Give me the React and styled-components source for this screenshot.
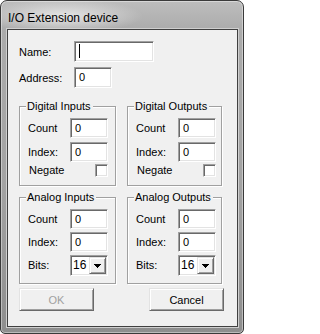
import React from 'react';
import styled, { createGlobalStyle } from 'styled-components';

const Global = createGlobalStyle`
  html, body { margin: 0; padding: 0; background: #fff; }
  body { font-family: "Liberation Sans", Arial, sans-serif; color: #000; }
  * { box-sizing: border-box; }
`;

const Window = styled.div`
  width: 244px;
  height: 334px;
  display: flex;
  flex-direction: column;
  border: 1px solid #3a3a3a;
  border-radius: 7px 7px 5px 5px;
  padding: 0 5px 6px 6px;
  overflow: hidden;
  background:
    radial-gradient(ellipse 80px 17px at 62px 15px, rgba(232,232,232,0.95), rgba(232,232,232,0)),
    linear-gradient(#bdbdbd 0px, #ababab 30px, #a3a3a3 55%, #8e8e8e 100%);
  box-shadow: inset 0 0 0 1px rgba(255,255,255,0.4);
`;

const TitleBar = styled.div`
  height: 28px;
  padding: 7px 0 0 1px;
  flex: none;
`;

const Title = styled.span`
  font-size: 12px;
  line-height: 14px;
  color: #000;
  white-space: nowrap;
`;

const Client = styled.div`
  flex: 1;
  background: #f0f0f0;
  border: 1px solid #404040;
  box-shadow: 0 0 0 1px #cfcfcf;
  padding: 11px 13px 0 11px;
  display: flex;
  flex-direction: column;
`;

const TopRow = styled.div`
  display: flex;
  align-items: center;
  height: 21px;
  margin-top: ${p => p.$mt || 0}px;
`;

const TopLabel = styled.span`
  width: 55px;
  font-size: 11px;
  line-height: 13px;
  padding-top: 2px;
  white-space: nowrap;
`;

const sunken = `
  background: #fff;
  border-style: solid;
  border-width: 1px;
  border-color: #a0a0a0 #ffffff #ffffff #a0a0a0;
  box-shadow: inset 1px 1px 0 #696969, inset -1px -1px 0 #e3e3e3;
`;

const TextBox = styled.div`
  ${sunken}
  width: ${p => p.$w}px;
  height: ${p => p.$h || 20}px;
  padding-left: ${p => p.$pl || 4}px;
  display: flex;
  align-items: center;
  font-size: 11px;
  line-height: 13px;
`;

const Caret = styled.span`
  display: block;
  width: 1px;
  height: 14px;
  margin-top: -2px;
  background: #000;
`;

const GroupGrid = styled.div`
  display: grid;
  grid-template-columns: 97px 95px;
  column-gap: 11px;
  row-gap: 11px;
  margin-top: 18px;
`;

const Group = styled.div`
  position: relative;
  border: 1px solid #a0a0a0;
  box-shadow: inset 1px 1px 0 #fff, 1px 1px 0 #fff;
  padding: 11px 4px ${p => p.$pb}px 8px;
  display: flex;
  flex-direction: column;
  gap: ${p => p.$gap}px;
`;

const GroupTitle = styled.span`
  position: absolute;
  top: -7px;
  left: 6px;
  padding: 0 2px 0 1px;
  background: #f0f0f0;
  font-size: 11px;
  line-height: 13px;
  white-space: nowrap;
`;

const Row = styled.div`
  display: grid;
  grid-template-columns: 42px 38px;
  align-items: center;
  margin-top: ${p => p.$mt || 0}px;
`;

const Label = styled.span`
  font-size: 11px;
  line-height: 13px;
  white-space: nowrap;
  padding-left: ${p => p.$pl || 0}px;
`;

const CheckBox = styled.span`
  ${sunken}
  width: 13px;
  height: 13px;
  justify-self: end;
`;

const Combo = styled.div`
  ${sunken}
  width: 38px;
  height: 21px;
  display: flex;
  align-items: stretch;
`;

const ComboValue = styled.span`
  flex: 1;
  padding: 2px 0 0 2px;
  font-size: 12px;
  line-height: 15px;
`;

const raised = `
  background: #f0f0f0;
  border-style: solid;
  border-width: 1px;
  border-color: #e3e3e3 #696969 #696969 #e3e3e3;
  box-shadow: inset 1px 1px 0 #fff, inset -1px -1px 0 #a0a0a0;
`;

const ComboButton = styled.span`
  ${raised}
  width: 17px;
  display: flex;
  align-items: center;
  justify-content: center;
  margin: 1px 1px 1px 0;
`;

const ButtonRow = styled.div`
  display: flex;
  justify-content: space-between;
  margin-top: 4px;
`;

const Button = styled.button`
  ${raised}
  width: 75px;
  height: 23px;
  padding: 0;
  font-family: "Liberation Sans", Arial, sans-serif;
  font-size: 11px;
  color: ${p => (p.disabled ? '#a0a0a0' : '#000')};
  cursor: default;
`;

const Arrow = () => (
  <svg width="7" height="4" viewBox="0 0 7 4" shapeRendering="crispEdges">
    <path d="M0 0H7V1H6V2H5V3H4V4H3V3H2V2H1V1H0Z" fill="#000" />
  </svg>
);

const DigitalGroup = ({ title }) => (
  <Group $pb={8} $gap={0}>
    <GroupTitle>{title}</GroupTitle>
    <Row>
      <Label>Count</Label>
      <TextBox $w={38} $pl={4}>0</TextBox>
    </Row>
    <Row $mt={4}>
      <Label>Index:</Label>
      <TextBox $w={38} $pl={4}>0</TextBox>
    </Row>
    <Row $mt={2}>
      <Label $pl={1}>Negate</Label>
      <CheckBox />
    </Row>
  </Group>
);

const AnalogGroup = ({ title }) => (
  <Group $pb={7} $gap={0}>
    <GroupTitle>{title}</GroupTitle>
    <Row>
      <Label>Count</Label>
      <TextBox $w={38} $pl={4}>0</TextBox>
    </Row>
    <Row $mt={3}>
      <Label>Index:</Label>
      <TextBox $w={38} $pl={4}>0</TextBox>
    </Row>
    <Row $mt={3}>
      <Label>Bits:</Label>
      <Combo>
        <ComboValue>16</ComboValue>
        <ComboButton><Arrow /></ComboButton>
      </Combo>
    </Row>
  </Group>
);

export default function App() {
  return (
    <>
      <Global />
      <Window>
        <TitleBar>
          <Title>I/O Extension device</Title>
        </TitleBar>
        <Client>
          <TopRow>
            <TopLabel>Name:</TopLabel>
            <TextBox $w={80} $h={21} $pl={4}><Caret /></TextBox>
          </TopRow>
          <TopRow $mt={5}>
            <TopLabel>Address:</TopLabel>
            <TextBox $w={38} $h={21} $pl={4}>0</TextBox>
          </TopRow>
          <GroupGrid>
            <DigitalGroup title="Digital Inputs" />
            <DigitalGroup title="Digital Outputs" />
            <AnalogGroup title="Analog Inputs" />
            <AnalogGroup title="Analog Outputs" />
          </GroupGrid>
          <ButtonRow>
            <Button disabled>OK</Button>
            <Button>Cancel</Button>
          </ButtonRow>
        </Client>
      </Window>
    </>
  );
}
